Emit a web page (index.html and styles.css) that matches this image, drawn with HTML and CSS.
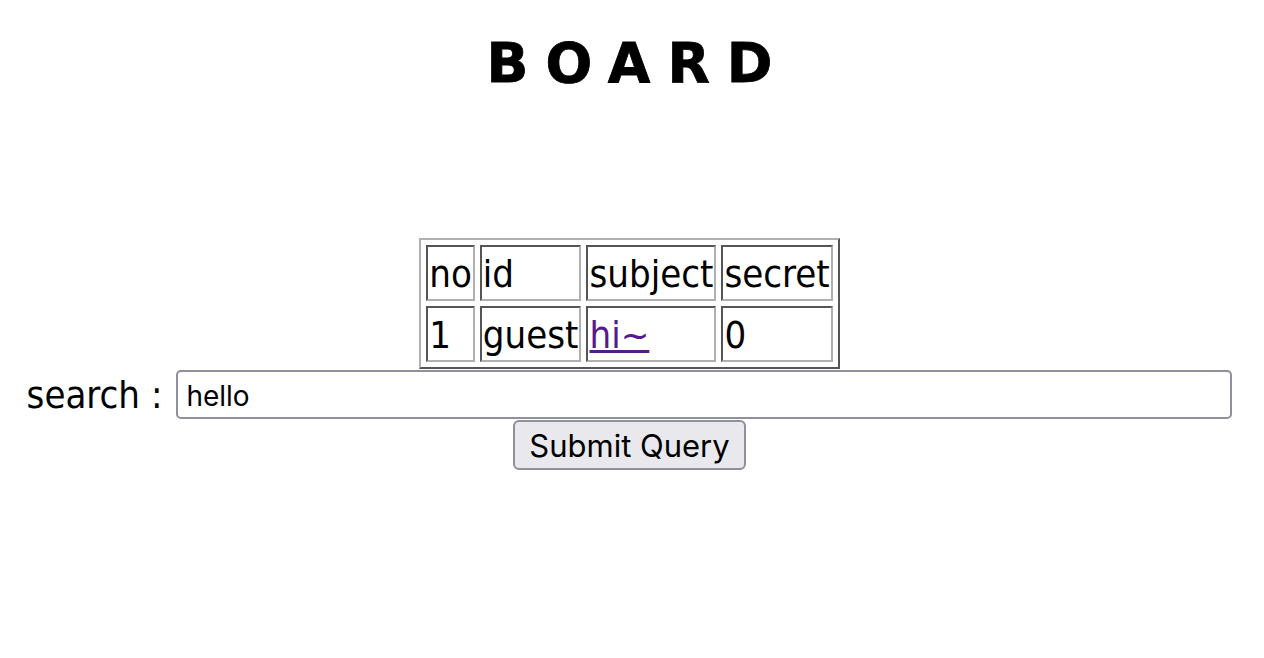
FILE: index.html
```html
<!DOCTYPE html>
<html>
<head>
<meta charset="utf-8">
<title>BOARD</title>
<link rel="stylesheet" href="styles.css">
</head>
<body>
<div class="page">
  <h1 class="title">BOARD</h1>
  <table class="board">
    <tr>
      <td>no</td>
      <td>id</td>
      <td>subject</td>
      <td>secret</td>
    </tr>
    <tr>
      <td>1</td>
      <td>guest</td>
      <td><a class="link" href="#">hi~</a></td>
      <td>0</td>
    </tr>
  </table>
  <form class="search">
    <div class="search-row">
      <span class="label">search :</span>
      <input class="field" type="text" value="hello">
    </div>
    <div class="button-row">
      <button class="submit" type="button">Submit Query</button>
    </div>
  </form>
</div>
</body>
</html>
```
FILE: styles.css
```css
html, body {
  margin: 0;
  padding: 0;
  background: #ffffff;
}
.page {
  padding: 0 13px 0 8px;
  font-family: "DejaVu Sans", Verdana, sans-serif;
  font-stretch: condensed;
  color: #000;
}
.title {
  margin: 0;
  padding-top: 31px;
  height: 208px;
  box-sizing: border-box;
  text-align: center;
  font-family: "DejaVu Sans", Verdana, sans-serif;
  font-stretch: normal;
  font-weight: bold;
  font-size: 55px;
  line-height: 64px;
  letter-spacing: 0.31em;
  text-indent: 0.31em;
  -webkit-text-stroke: 0.8px #000;
}
.board {
  margin: 30px auto 0;
  border-collapse: separate;
  border-spacing: 5px;
  border: 2px solid;
  border-color: #b0b0b0 #555555 #555555 #b0b0b0;
  font-size: 38px;
}
.board td {
  border: 2px solid;
  border-color: #555555 #b0b0b0 #b0b0b0 #555555;
  padding: 3px 1px 1px 1px;
  line-height: 48px;
  text-align: left;
  white-space: nowrap;
}
.link {
  color: #551a8b;
  text-decoration: underline;
}
.search {
  margin: 0;
}
.search-row {
  display: flex;
  justify-content: center;
  align-items: center;
  gap: 14px;
  margin-top: 1px;
}
.label {
  font-size: 38px;
  line-height: 48px;
}
.field {
  width: 1056px;
  height: 49px;
  flex: none;
  box-sizing: border-box;
  border: 2px solid #8f8f9d;
  border-radius: 5px;
  padding: 2px 8px 0;
  font-family: Inter, "Liberation Sans", sans-serif;
  font-size: 28px;
  color: #000;
  background: #fff;
  outline: none;
}
.button-row {
  display: flex;
  justify-content: center;
  margin-top: 1px;
}
.submit {
  width: 233px;
  height: 50px;
  box-sizing: border-box;
  border: 2px solid #8f8f9d;
  border-radius: 6px;
  background: #e9e9ed;
  font-family: Inter, "Liberation Sans", sans-serif;
  font-size: 31px;
  color: #000;
  padding: 0;
}
```
